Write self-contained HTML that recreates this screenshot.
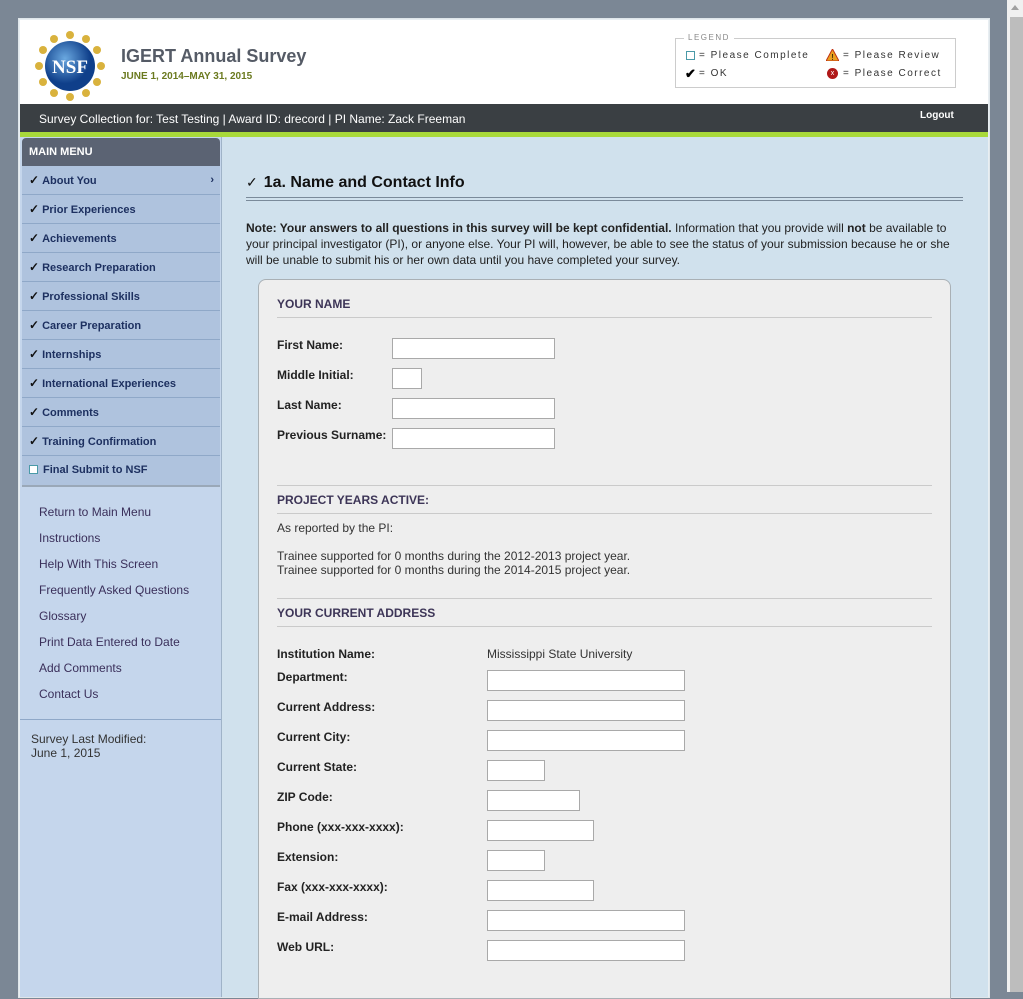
<!DOCTYPE html>
<html><head><meta charset="utf-8"><style>
*{margin:0;padding:0;box-sizing:border-box}
body{width:1023px;height:992px;overflow:hidden;background:#7b8795;font-family:"Liberation Sans",Arial,sans-serif;position:relative}
.a{position:absolute}
#wrap{left:18px;top:18px;width:972px;height:980px;background:#e8eef2;border:1px solid #dfe6ea}
#hdr{left:20px;top:20px;width:968px;height:84px;background:#fff}
#bar{left:20px;top:104px;width:968px;height:28px;background:#3a3f43;color:#fff;font-size:12px}
#green{left:20px;top:132px;width:968px;height:5px;background:#a8d93a}
#side{left:20px;top:137px;width:202px;height:860px;background:#c5d6ec;border-right:1px solid #9fb3c8}
#main{left:222px;top:137px;width:766px;height:860px;background:#d0e1ed}
.mh{left:22px;top:138px;width:198px;height:28px;background:#5b6373;border-radius:4px 4px 0 0;color:#fff;font-weight:bold;font-size:11px;padding:8px 0 0 7px}
.mi{position:absolute;left:22px;width:198px;height:29px;background:#afc3de;border-bottom:1px solid #8fa8c8;color:#1d3060;font-weight:bold;font-size:11px;padding:8px 0 0 7px;line-height:13px}
.mi span{font-size:12px;margin-right:3px;color:#111}
.ln{position:absolute;left:39px;font-size:12px;color:#3a2f5a}
#panel{left:258px;top:279px;width:693px;height:720px;background:#eeeeee;border:1px solid #a9b0b5;border-radius:8px 8px 0 0}
.sh{position:absolute;left:277px;width:655px;font-size:12px;font-weight:bold;color:#3d3557;border-bottom:1px solid #cacaca;padding-bottom:6px}
.lb{position:absolute;left:277px;font-size:12px;font-weight:bold;color:#222}
.in{position:absolute;height:21px;background:#fff;border:1px solid #a9a9a9}
.tx{position:absolute;font-size:12px;color:#333}
.lg{position:absolute;font-size:10px;letter-spacing:1.5px;color:#333}
</style></head><body>
<div class="a" id="wrap"></div>
<div class="a" id="hdr"></div>
<svg class="a" style="left:34px;top:30px" width="72" height="72" viewBox="0 0 72 72">
<g fill="#d9b23d">
<circle cx="36" cy="5" r="4"/><circle cx="52" cy="9" r="4"/><circle cx="63" cy="20" r="4"/><circle cx="67" cy="36" r="4"/><circle cx="63" cy="52" r="4"/><circle cx="52" cy="63" r="4"/><circle cx="36" cy="67" r="4"/><circle cx="20" cy="63" r="4"/><circle cx="9" cy="52" r="4"/><circle cx="5" cy="36" r="4"/><circle cx="9" cy="20" r="4"/><circle cx="20" cy="9" r="4"/></g>
<defs><radialGradient id="g" cx="40%" cy="35%"><stop offset="0" stop-color="#6aa8e0"/><stop offset="1" stop-color="#0f3f8a"/></radialGradient></defs>
<circle cx="36" cy="36" r="25" fill="url(#g)"/>
<text x="36" y="43" font-family="Liberation Serif,serif" font-size="19" fill="#fff" text-anchor="middle" font-weight="bold">NSF</text>
</svg>
<div class="a" style="left:121px;top:46px;font-size:18px;font-weight:bold;color:#555b66">IGERT Annual Survey</div>
<div class="a" style="left:121px;top:71px;font-size:10px;font-weight:bold;color:#6b7a1f">JUNE 1, 2014–MAY 31, 2015</div>
<div class="a" style="left:675px;top:38px;width:281px;height:50px;border:1px solid #ccc"></div>
<div class="a" style="left:684px;top:33px;background:#fff;padding:0 4px;font-size:8px;letter-spacing:1.5px;color:#888">LEGEND</div>
<div class="a" style="left:686px;top:51px;width:9px;height:9px;border:1px solid #4a9aa8"></div>
<div class="lg" style="left:699px;top:50px">= Please Complete</div>
<div class="a" style="left:685px;top:66px;font-size:13px;font-weight:bold">✔</div>
<div class="lg" style="left:699px;top:68px">= OK</div>
<svg class="a" style="left:826px;top:49px" width="13" height="12"><polygon points="6.5,0 13,12 0,12" fill="#e8a020" stroke="#c03010"/><text x="6.5" y="11" font-size="8" text-anchor="middle" fill="#000">!</text></svg>
<div class="lg" style="left:843px;top:50px">= Please Review</div>
<div class="a" style="left:827px;top:68px;width:11px;height:11px;border-radius:50%;background:#b01818;color:#fff;font-size:7px;text-align:center;line-height:11px">x</div>
<div class="lg" style="left:843px;top:68px">= Please Correct</div>
<div class="a" id="bar"><span class="a" style="left:19px;top:8px">Survey Collection for: Test Testing | Award ID: drecord | PI Name: Zack Freeman</span><span class="a" style="left:900px;top:6px;font-size:10px;font-weight:bold">Logout</span></div>
<div class="a" id="green"></div>
<div class="a" id="side"></div>
<div class="a" id="main"></div>
<div class="a mh">MAIN MENU</div>
<div class="mi" style="top:166px"><span>✓</span>About You<b style="position:absolute;right:6px;top:8px">›</b></div>
<div class="mi" style="top:195px"><span>✓</span>Prior Experiences</div>
<div class="mi" style="top:224px"><span>✓</span>Achievements</div>
<div class="mi" style="top:253px"><span>✓</span>Research Preparation</div>
<div class="mi" style="top:282px"><span>✓</span>Professional Skills</div>
<div class="mi" style="top:311px"><span>✓</span>Career Preparation</div>
<div class="mi" style="top:340px"><span>✓</span>Internships</div>
<div class="mi" style="top:369px"><span>✓</span>International Experiences</div>
<div class="mi" style="top:398px"><span>✓</span>Comments</div>
<div class="mi" style="top:427px"><span>✓</span>Training Confirmation</div>
<div class="mi" style="top:456px;height:31px;border-bottom:2px solid #9aa8b8"><i style="display:inline-block;width:9px;height:9px;border:1px solid #4a9aa8;background:#fff;margin-right:5px;vertical-align:-1px"></i>Final Submit to NSF</div>
<div class="ln" style="top:505px">Return to Main Menu</div>
<div class="ln" style="top:531px">Instructions</div>
<div class="ln" style="top:557px">Help With This Screen</div>
<div class="ln" style="top:583px">Frequently Asked Questions</div>
<div class="ln" style="top:609px">Glossary</div>
<div class="ln" style="top:635px">Print Data Entered to Date</div>
<div class="ln" style="top:661px">Add Comments</div>
<div class="ln" style="top:687px">Contact Us</div>
<div class="a" style="left:20px;top:719px;width:201px;border-top:1px solid #8fa8c8"></div>
<div class="a" style="left:31px;top:732px;font-size:12px;color:#333;line-height:14px">Survey Last Modified:<br>June 1, 2015</div>
<div class="a" style="left:246px;top:174px;font-size:16px;font-weight:bold;color:#111"><span style="font-weight:normal;font-size:14px;margin-right:6px">✓</span>1a. Name and Contact Info</div>
<div class="a" style="left:246px;top:197px;width:717px;height:4px;border-top:1px solid #7a8a9a;border-bottom:1px solid #7a8a9a"></div>
<div class="a" style="left:246px;top:220px;width:720px;font-size:12px;line-height:16px;color:#222"><b>Note: Your answers to all questions in this survey will be kept confidential.</b> Information that you provide will <b>not</b> be available to your principal investigator (PI), or anyone else. Your PI will, however, be able to see the status of your submission because he or she will be unable to submit his or her own data until you have completed your survey.</div>
<div class="a" id="panel"></div>
<div class="sh" style="top:297px">YOUR NAME</div>
<div class="lb" style="top:338px">First Name:</div><div class="in" style="left:392px;top:338px;width:163px"></div>
<div class="lb" style="top:368px">Middle Initial:</div><div class="in" style="left:392px;top:368px;width:30px"></div>
<div class="lb" style="top:398px">Last Name:</div><div class="in" style="left:392px;top:398px;width:163px"></div>
<div class="lb" style="top:428px">Previous Surname:</div><div class="in" style="left:392px;top:428px;width:163px"></div>
<div class="a" style="left:277px;top:485px;width:655px;border-top:1px solid #cacaca"></div>
<div class="sh" style="top:493px">PROJECT YEARS ACTIVE:</div>
<div class="tx" style="left:277px;top:521px">As reported by the PI:</div>
<div class="tx" style="left:277px;top:549px;line-height:14px">Trainee supported for 0 months during the 2012-2013 project year.<br>Trainee supported for 0 months during the 2014-2015 project year.</div>
<div class="a" style="left:277px;top:598px;width:655px;border-top:1px solid #cacaca"></div>
<div class="sh" style="top:606px">YOUR CURRENT ADDRESS</div>
<div class="lb" style="top:647px">Institution Name:</div><div class="tx" style="left:487px;top:647px">Mississippi State University</div>
<div class="lb" style="top:670px">Department:</div><div class="in" style="left:487px;top:670px;width:198px"></div>
<div class="lb" style="top:700px">Current Address:</div><div class="in" style="left:487px;top:700px;width:198px"></div>
<div class="lb" style="top:730px">Current City:</div><div class="in" style="left:487px;top:730px;width:198px"></div>
<div class="lb" style="top:760px">Current State:</div><div class="in" style="left:487px;top:760px;width:58px"></div>
<div class="lb" style="top:790px">ZIP Code:</div><div class="in" style="left:487px;top:790px;width:93px"></div>
<div class="lb" style="top:820px">Phone (xxx-xxx-xxxx):</div><div class="in" style="left:487px;top:820px;width:107px"></div>
<div class="lb" style="top:850px">Extension:</div><div class="in" style="left:487px;top:850px;width:58px"></div>
<div class="lb" style="top:880px">Fax (xxx-xxx-xxxx):</div><div class="in" style="left:487px;top:880px;width:107px"></div>
<div class="lb" style="top:910px">E-mail Address:</div><div class="in" style="left:487px;top:910px;width:198px"></div>
<div class="lb" style="top:940px">Web URL:</div><div class="in" style="left:487px;top:940px;width:198px"></div>
<div class="a" style="left:1007px;top:0;width:16px;height:992px;background:#f0f0f0"></div>
<div class="a" style="left:1010px;top:17px;width:13px;height:975px;background:#bdbdbd"></div>
<div class="a" style="left:1011px;top:5px;width:0;height:0;border-left:4px solid transparent;border-right:4px solid transparent;border-bottom:5px solid #a0a0a0"></div>
</body></html>
